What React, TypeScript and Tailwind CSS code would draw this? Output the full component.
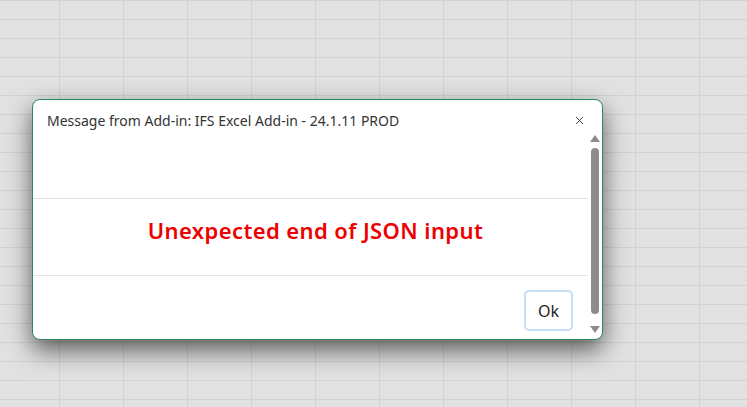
import { X } from "lucide-react"

const COLS = 12
const ROWS = 22

function Sheet() {
  const cells = []
  for (let r = 0; r < ROWS; r++) {
    for (let c = 0; c < COLS; c++) {
      cells.push(
        <div
          key={`${r}-${c}`}
          className="h-[19px] border-t border-r border-[#d2d2d2]"
        />
      )
    }
  }
  return (
    <div className="grid grid-cols-[60px_repeat(11,64px)] bg-[#e1e1e1]">
      {cells}
    </div>
  )
}

function Scrollbar() {
  return (
    <div className="flex w-[14px] flex-col items-center pt-[35px] pb-[6px]">
      <div className="h-0 w-0 border-x-[5px] border-b-[7px] border-x-transparent border-b-[#8c8c8c]" />
      <div className="mt-[6px] w-[8px] flex-1 rounded-full bg-[#8c8c8c]" />
      <div className="mt-[12px] h-0 w-0 border-x-[5px] border-t-[7px] border-x-transparent border-t-[#8c8c8c]" />
    </div>
  )
}

export default function App() {
  return (
    <div className="relative h-[407px] w-[747px] overflow-hidden font-['Noto_Sans',sans-serif]">
      <Sheet />
      <div className="absolute left-[32px] top-[99px] flex h-[241px] w-[571px] rounded-[8px] border border-[#2f8a5c] bg-white shadow-[0_10px_24px_rgba(0,0,0,0.6)]">
        <div className="flex flex-1 flex-col">
          <div className="flex h-[98px] items-start justify-between pl-[14px] pr-[2px] pt-[10px]">
            <span className="text-[14px] text-[#333333]">
              Message from Add-in: IFS Excel Add-in - 24.1.11 PROD
            </span>
            <X className="mt-[4px] h-[13px] w-[13px] text-[#333333]" strokeWidth={1.7} />
          </div>
          <div className="flex h-[78px] items-center justify-center border-y border-[#e3e3e3] pb-[14px] pl-[10px]">
            <span className="text-[22px] font-semibold tracking-[0.4px] text-[#ee0000]">
              Unexpected end of JSON input
            </span>
          </div>
          <div className="flex flex-1 items-start justify-end pr-[15px] pt-[14px]">
            <button
              type="button"
              className="h-[41px] w-[49px] rounded-[5px] border-2 border-[#c6ddf7] bg-white text-[16px] text-[#222222]"
            >
              Ok
            </button>
          </div>
        </div>
        <Scrollbar />
      </div>
    </div>
  )
}
